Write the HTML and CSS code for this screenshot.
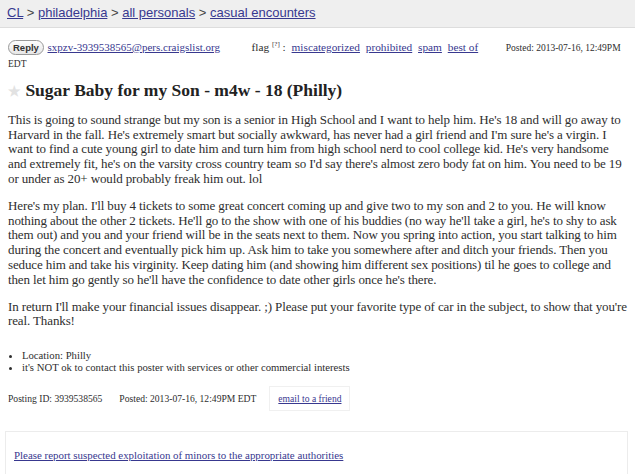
FILE: index.html
```html
<!DOCTYPE html>
<html>
<head>
<meta charset="utf-8">
<link rel="stylesheet" href="styles.css">
</head>
<body>
<header class="bchead">
  <a href="#">CL</a> &gt; <a href="#">philadelphia</a> &gt; <a href="#">all personals</a> &gt; <a href="#">casual encounters</a>
</header>
<main class="posting">
  <div class="dateReplyBar">
    <span class="replybtn">Reply</span>
    <a class="email" href="#">sxpzv-3939538565@pers.craigslist.org</a>
    <span class="flags">flag <sup>[?]</sup> : <a href="#">miscategorized</a> <a href="#">prohibited</a> <a href="#">spam</a> <a href="#">best of</a></span>
    <span class="postdate"><span class="nowrap">Posted: 2013-07-16, 12:49PM</span> EDT</span>
  </div>
  <h2 class="postingtitle"><span class="star">&#9733;</span> Sugar Baby for my Son - m4w - 18 (Philly)</h2>
  <section class="userbody">
    <p>This is going to sound strange but my son is a senior in High School and I want to help him. He's 18 and will go away to Harvard in the fall. He's extremely smart but socially awkward, has never had a girl friend and I'm sure he's a virgin. I want to find a cute young girl to date him and turn him from high school nerd to cool college kid. He's very handsome and extremely fit, he's on the varsity cross country team so I'd say there's almost zero body fat on him. You need to be 19 or under as 20+ would probably freak him out. lol</p>
    <p>Here's my plan. I'll buy 4 tickets to some great concert coming up and give two to my son and 2 to you. He will know nothing about the other 2 tickets. He'll go to the show with one of his buddies (no way he'll take a girl, he's to shy to ask them out) and you and your friend will be in the seats next to them. Now you spring into action, you start talking to him during the concert and eventually pick him up. Ask him to take you somewhere after and ditch your friends. Then you seduce him and take his virginity. Keep dating him (and showing him different sex positions) til he goes to college and then let him go gently so he'll have the confidence to date other girls once he's there.</p>
    <p>In return I'll make your financial issues disappear. ;) Please put your favorite type of car in the subject, to show that you're real. Thanks!</p>
    <ul class="notices">
      <li>Location: Philly</li>
      <li>it's NOT ok to contact this poster with services or other commercial interests</li>
    </ul>
  </section>
  <div class="postinginfos">
    <span>Posting ID: 3939538565</span>
    <span>Posted: 2013-07-16, 12:49PM EDT</span>
    <a class="tofriend" href="#">email to a friend</a>
  </div>
  <div class="report">
    <a href="#">Please report suspected exploitation of minors to the appropriate authorities</a>
  </div>
</main>
</body>
</html>
```

FILE: styles.css
```css
html, body {
  margin: 0;
  padding: 0;
  background: #fff;
}
body {
  font-family: "Liberation Serif", "Times New Roman", serif;
  color: #2e2e2e;
  width: 635px;
  height: 474px;
  overflow: hidden;
}
a {
  color: #38388f;
}
.bchead {
  background: #efefef;
  border-bottom: 1px solid #dddddd;
  font-family: "Liberation Sans", Arial, sans-serif;
  font-size: 13px;
  color: #444;
  height: 27px;
  line-height: 26px;
  padding-left: 7px;
}
.posting {
  padding: 0 7px 0 8px;
}
.dateReplyBar {
  margin-top: 8px;
  font-size: 10.5px;
  line-height: 16px;
}
.replybtn {
  display: inline-block;
  font-family: "Liberation Sans", Arial, sans-serif;
  font-weight: bold;
  font-size: 9.5px;
  color: #333;
  border: 1px solid #999;
  border-radius: 8px;
  background: linear-gradient(#fdfdfd, #e6e6e6);
  padding: 0 4px;
  line-height: 13px;
  margin-right: 1px;
}
.email {
  font-size: 11px;
  margin-right: 29px;
}
.flags {
  font-size: 11.3px;
}
.flags sup {
  font-size: 7px;
}
.flags a {
  margin-left: 3px;
}
.postdate {
  font-size: 9.5px;
  margin-left: 25px;
}
.nowrap {
  white-space: nowrap;
}
.postingtitle {
  font-size: 17.5px;
  font-weight: bold;
  margin: 7px 0 0 0;
  line-height: 22px;
  color: #222;
}
.star {
  color: #e2e2e2;
  font-size: 14px;
}
.userbody {
  font-size: 13px;
  letter-spacing: -0.12px;
  line-height: 14.8px;
  margin-top: 10px;
}
.userbody p {
  margin: 0 0 12px 0;
}
.notices {
  font-size: 10.7px;
  letter-spacing: 0;
  line-height: 12px;
  margin: 20px 0 0 0;
  padding-left: 14px;
}
.postinginfos {
  margin-top: 13px;
  font-size: 9.6px;
  display: flex;
  align-items: center;
  gap: 17px;
}
.tofriend {
  border: 1px solid #f0f0f0;
  padding: 6px 8px;
  margin-left: -4px;
}
.report {
  margin: 20px 0 0 -3px;
  border: 1px solid #ececec;
  border-bottom: none;
  height: 50px;
  padding: 17px 0 0 8px;
  box-sizing: border-box;
  font-size: 10.9px;
}
```
